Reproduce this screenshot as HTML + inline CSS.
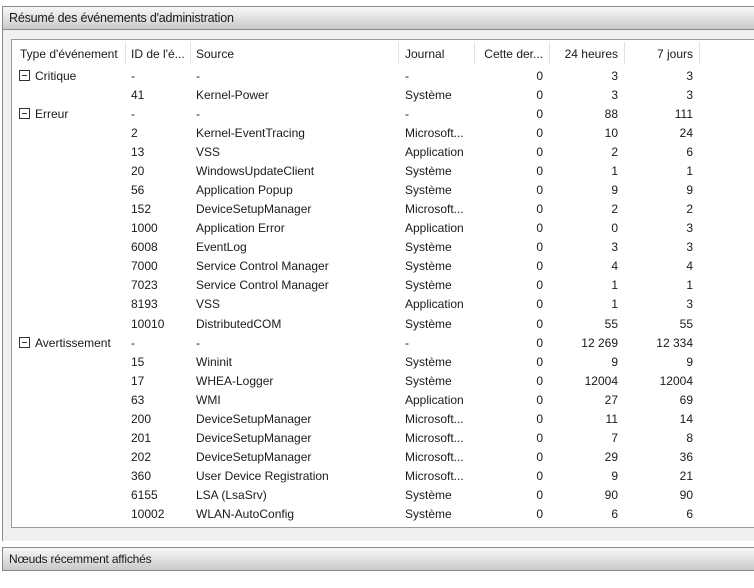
<!DOCTYPE html>
<html><head><style>
body{margin:0;width:754px;height:588px;background:#fff;font-family:"Liberation Sans",sans-serif;font-size:12px;color:#1a1a1a;position:relative;overflow:hidden}
.hdr{position:absolute;left:2px;right:0;height:22px;border:1px solid #8a8a8a;border-right:none;background:linear-gradient(#f7f7f7,#e6e6e6 40%,#c9c9c9);}
.hdr span{position:absolute;left:6px;top:4px;font-size:12.5px;letter-spacing:-0.2px}
.grey{position:absolute;left:2px;right:0;top:30px;height:511px;background:#f0f0f0;border-left:1px solid #8a8a8a}
.box{position:absolute;left:11px;top:39px;right:0;height:487px;background:#fff;border:1px solid #9a9a9a;border-right:none}
.t{position:absolute;white-space:nowrap}
.r{text-align:right}
.sep{position:absolute;top:2px;width:1px;height:22px;background:#e3e3e3}
.pm{position:absolute;width:9px;height:9px;border:1px solid #333}
.pm:after{content:"";position:absolute;left:2px;top:4px;width:5px;height:1px;background:#333}
</style></head><body>
<div class="hdr" style="top:6px"><span>Résumé des événements d'administration</span></div>
<div class="grey"></div>
<div class="box" id="b"></div>
<div class="hdr" style="top:547px"><span style="font-size:12px">Nœuds récemment affichés</span></div>
<script>
var b=document.getElementById('b');
var seps=[125,190,398,474,549,624,699];
seps.forEach(function(x){var d=document.createElement('div');d.className='sep';d.style.left=(x-12)+'px';b.appendChild(d);});
function T(x,y,s,right){var d=document.createElement('div');d.className='t'+(right?' r':'');d.textContent=s;d.style.top=(y-40-6)+'px';if(right){d.style.left=(x-12-100)+'px';d.style.width='100px';}else d.style.left=(x-12)+'px';b.appendChild(d);}
var H=[["Type d'événement",20],["ID de l'é...",131],["Source",196],["Journal",405]];
H.forEach(function(h){T(h[1],53,h[0])});
T(543,53,"Cette der...",1);T(618,53,"24 heures",1);T(693,53,"7 jours",1);
var rows=[
["Critique","-","-","-","0","3","3"],["","41","Kernel-Power","Système","0","3","3"],
["Erreur","-","-","-","0","88","111"],["","2","Kernel-EventTracing","Microsoft...","0","10","24"],
["","13","VSS","Application","0","2","6"],["","20","WindowsUpdateClient","Système","0","1","1"],
["","56","Application Popup","Système","0","9","9"],["","152","DeviceSetupManager","Microsoft...","0","2","2"],
["","1000","Application Error","Application","0","0","3"],["","6008","EventLog","Système","0","3","3"],
["","7000","Service Control Manager","Système","0","4","4"],["","7023","Service Control Manager","Système","0","1","1"],
["","8193","VSS","Application","0","1","3"],["","10010","DistributedCOM","Système","0","55","55"],
["Avertissement","-","-","-","0","12 269","12 334"],["","15","Wininit","Système","0","9","9"],
["","17","WHEA-Logger","Système","0","12004","12004"],["","63","WMI","Application","0","27","69"],
["","200","DeviceSetupManager","Microsoft...","0","11","14"],["","201","DeviceSetupManager","Microsoft...","0","7","8"],
["","202","DeviceSetupManager","Microsoft...","0","29","36"],["","360","User Device Registration","Microsoft...","0","9","21"],
["","6155","LSA (LsaSrv)","Système","0","90","90"],["","10002","WLAN-AutoConfig","Système","0","6","6"]];
rows.forEach(function(r,i){var y=75+i*19.04;
if(r[0]){var p=document.createElement('div');p.className='pm';p.style.left=(19-12)+'px';p.style.top=(y-5-40)+'px';b.appendChild(p);T(35,y,r[0]);}
T(131,y,r[1]);T(196,y,r[2]);T(405,y,r[3]);T(543,y,r[4],1);T(618,y,r[5],1);T(693,y,r[6],1);});
</script>
</body></html>
